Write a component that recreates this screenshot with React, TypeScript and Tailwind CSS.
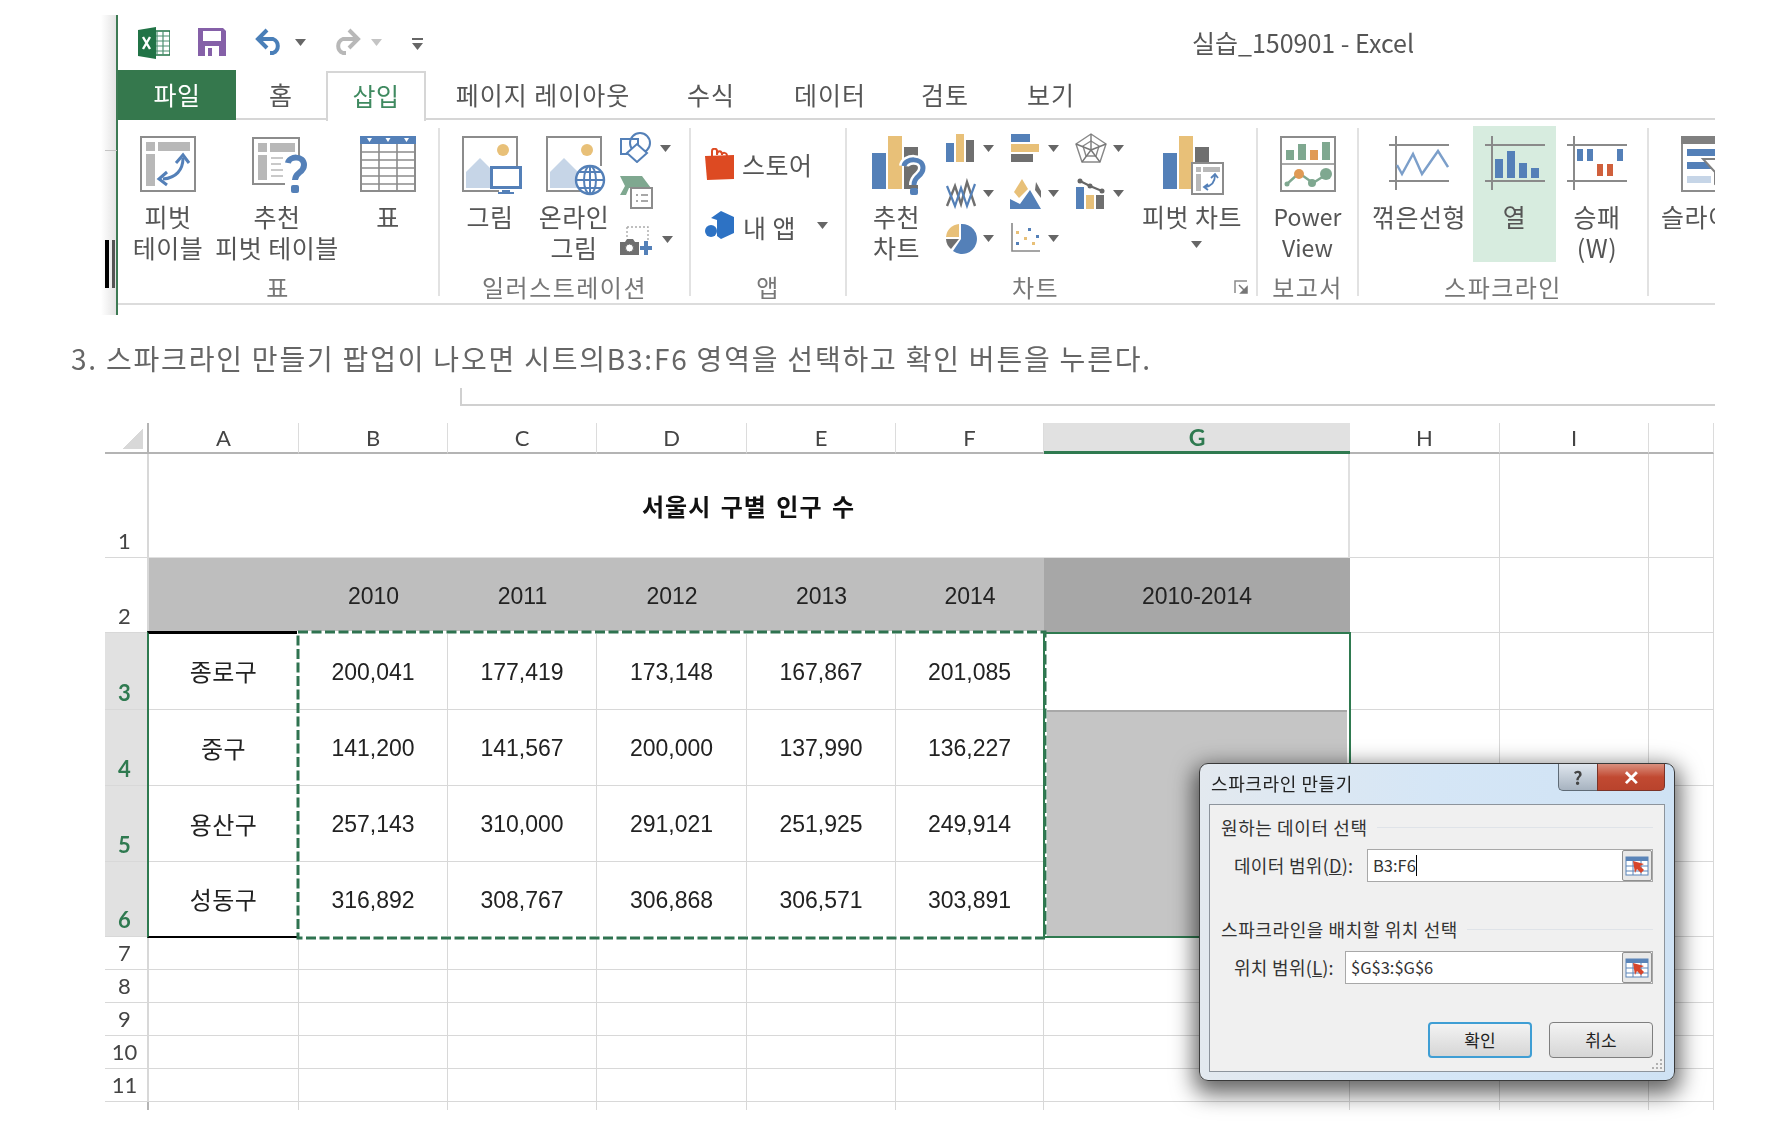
import type { ReactNode } from "react";

const BLUE = "#5480b8";
const TAN = "#e8c078";
const GRAY = "#6f6f6f";
const FRAME = "#8c8c8c";
const TEAL = "#7fa890";

const sheetCols =
  "grid grid-cols-[44px_150px_149px_149px_150px_149px_148px_306px_150px_149px_65px] grid-rows-[31px_104px_75px_77px_76px_76px_75px_33px_33px_33px_33px_33px_8px]";

const tabs = [
  { label: "홈", w: "w-[90px]" },
  { label: "삽입", w: "w-[100px]", active: true },
  { label: "페이지 레이아웃", w: "w-[234px]" },
  { label: "수식", w: "w-[102px]" },
  { label: "데이터", w: "w-[136px]" },
  { label: "검토", w: "w-[94px]" },
  { label: "보기", w: "w-[118px]" },
];

const dataRows = [
  { num: 3, name: "종로구", values: ["200,041", "177,419", "173,148", "167,867", "201,085"] },
  { num: 4, name: "중구", values: ["141,200", "141,567", "200,000", "137,990", "136,227"] },
  { num: 5, name: "용산구", values: ["257,143", "310,000", "291,021", "251,925", "249,914"] },
  { num: 6, name: "성동구", values: ["316,892", "308,767", "306,868", "306,571", "303,891"] },
];

const years = ["2010", "2011", "2012", "2013", "2014"];

function Caret({ light }: { light?: boolean }) {
  return (
    <svg width="11" height="7" viewBox="0 0 11 7" className="shrink-0">
      <path d="M0 0h11L5.5 7z" fill={light ? "#c4c4c4" : "#666"} />
    </svg>
  );
}

function ExcelLogo() {
  return (
    <svg width="32" height="32" viewBox="0 0 32 32">
      <rect x="14" y="4" width="18" height="24" fill="#fff" stroke="#217346" strokeWidth="1.5" />
      <path d="M19 4v24M25 4v24M14 9h18M14 14h18M14 19h18M14 24h18" stroke="#4d9071" strokeWidth="1.2" />
      <path d="M0 3 18 0v32L0 29z" fill="#217346" />
      <path d="M5 10l7 12M12 10 5 22" stroke="#fff" strokeWidth="2.4" />
    </svg>
  );
}

function SaveIcon() {
  return (
    <svg width="28" height="28" viewBox="0 0 28 28">
      <path d="M0 0h25l3 3v25H0z" fill="#8560a8" />
      <rect x="5" y="3" width="18" height="10" fill="#fff" />
      <rect x="7" y="18" width="14" height="10" fill="#fff" />
      <rect x="10" y="20" width="4" height="8" fill="#8560a8" />
    </svg>
  );
}

function UndoIcon({ color, flip }: { color: string; flip?: boolean }) {
  return (
    <svg width="30" height="27" viewBox="0 0 30 27" className={flip ? "-scale-x-100" : ""}>
      <path d="M4 11h14a7.5 7.5 0 0 1 0 14h-3" fill="none" stroke={color} strokeWidth="4" />
      <path d="M12 2 3 11l9 9" fill="none" stroke={color} strokeWidth="4" />
    </svg>
  );
}

function PivotIcon() {
  return (
    <svg width="56" height="56" viewBox="0 0 56 56">
      <rect x="1" y="1" width="54" height="54" fill="#fff" stroke={FRAME} strokeWidth="2" />
      <rect x="6" y="6" width="9" height="9" fill="#b8b8b8" />
      <rect x="18" y="6" width="32" height="9" fill="#b8b8b8" />
      <rect x="6" y="18" width="9" height="32" fill="#b8b8b8" />
      <path d="M43 22c0 12-7 20-20 21" fill="none" stroke={BLUE} strokeWidth="3" />
      <path d="M36 27l7-8 6 8M27 36l-8 7 8 6" fill="none" stroke={BLUE} strokeWidth="3" />
    </svg>
  );
}

function RecommendedPivotIcon() {
  return (
    <svg width="56" height="60" viewBox="0 0 56 60">
      <path d="M47 24V2H1v46h32" fill="#fff" stroke={FRAME} strokeWidth="2" />
      <rect x="6" y="7" width="9" height="9" fill="#b8b8b8" />
      <rect x="18" y="7" width="25" height="9" fill="#b8b8b8" />
      <rect x="6" y="19" width="9" height="25" fill="#b8b8b8" />
      <path d="M19 22h12M19 28h10M19 34h12M19 40h12" stroke="#c9c9c9" strokeWidth="2" />
      <path d="M36 27c1-7 16-8 16 2 0 8-9 7-9 15" fill="none" stroke={BLUE} strokeWidth="6" />
      <rect x="39" y="49" width="8" height="8" rx="2" fill={BLUE} />
    </svg>
  );
}

function TableIcon() {
  return (
    <svg width="56" height="56" viewBox="0 0 56 56">
      <rect x="1" y="1" width="54" height="54" fill="#fff" stroke={FRAME} strokeWidth="2" />
      <rect x="0" y="0" width="56" height="8" fill={BLUE} />
      <path d="M19 8v47M37 8v47M1 16h54M1 24h54M1 32h54M1 40h54M1 48h54" stroke={FRAME} strokeWidth="1.6" />
      <path d="M7 2h5L9.500 6zM25.500 2h5L28 6zM44 2h5l-2.500 4z" fill="#fff" />
    </svg>
  );
}

function PictureBase() {
  return (
    <>
      <path d="M55 30V1H1v54h36" fill="#fff" stroke={FRAME} strokeWidth="2" />
      <circle cx="41" cy="14" r="6" fill={TAN} />
      <path d="M4 52V36l14-14 14 14v16z" fill="#c6d5e7" />
    </>
  );
}

function PictureIcon() {
  return (
    <svg width="62" height="60" viewBox="0 0 62 60">
      <PictureBase />
      <rect x="29.500" y="31.500" width="29" height="20" fill="#fff" stroke={BLUE} strokeWidth="3" />
      <path d="M40 54h8v2h4v2H36v-2h4z" fill={BLUE} />
    </svg>
  );
}

function OnlinePictureIcon() {
  return (
    <svg width="62" height="60" viewBox="0 0 62 60">
      <PictureBase />
      <circle cx="44" cy="44" r="14" fill="#fff" stroke={BLUE} strokeWidth="2.4" />
      <ellipse cx="44" cy="44" rx="6" ry="14" fill="none" stroke={BLUE} strokeWidth="2" />
      <path d="M44 30v28M30 44h28M33 36h22M33 52h22" stroke={BLUE} strokeWidth="2" />
    </svg>
  );
}

function ShapesIcon() {
  return (
    <svg width="32" height="31" viewBox="0 0 32 31">
      <rect x="1" y="7" width="17" height="15" fill="none" stroke={BLUE} strokeWidth="2" />
      <circle cx="20" cy="11" r="10" fill="none" stroke={BLUE} strokeWidth="2" />
      <path d="M17 12l10 9-10 9-10-9z" fill="#fff" stroke={BLUE} strokeWidth="2" />
    </svg>
  );
}

function SmartArtIcon() {
  return (
    <svg width="33" height="33" viewBox="0 0 33 33">
      <path d="M0 0h22l9 12H9l-3 7H0l5-9z" fill={TEAL} />
      <rect x="11" y="12" width="21" height="20" fill="#fff" stroke={FRAME} strokeWidth="2" />
      <path d="M16 19h2M21 19h7M16 25h2M21 25h7" stroke={FRAME} strokeWidth="1.6" />
    </svg>
  );
}

function ScreenshotIcon() {
  return (
    <svg width="32" height="30" viewBox="0 0 32 30">
      <path d="M7 1h21v14" fill="none" stroke="#aaa" strokeWidth="1.4" strokeDasharray="2 2" />
      <path d="M7 1v10" stroke="#aaa" strokeWidth="1.4" strokeDasharray="2 2" />
      <path d="M0 16h5l2-3h6l2 3h4v13H0z" fill={GRAY} />
      <circle cx="9.500" cy="22" r="4" fill="#fff" stroke={GRAY} />
      <path d="M26 15v14M20 22h12" stroke={BLUE} strokeWidth="4" />
    </svg>
  );
}

function StoreIcon() {
  return (
    <svg width="30" height="32" viewBox="0 0 30 32">
      <path d="M0 8l29-1v24L2 32z" fill="#dd4a22" />
      <path d="M7 9V3c0-3 5-3 5 0v4c0-5 5-5 5 0 0-3 5-3 5 1" fill="none" stroke="#dd4a22" strokeWidth="2" />
    </svg>
  );
}

function MyAppsIcon() {
  return (
    <svg width="30" height="28" viewBox="0 0 30 28">
      <path d="M16 0l13 6v16l-13 6-4-3V9L6 7z" fill="#2d72c4" />
      <circle cx="6" cy="20" r="6" fill="#2d72c4" />
    </svg>
  );
}

function RecommendedChartIcon() {
  return (
    <svg width="56" height="60" viewBox="0 0 56 60">
      <rect x="0" y="17" width="14" height="36" fill={BLUE} />
      <rect x="16" y="0" width="14" height="53" fill={TAN} />
      <rect x="32" y="11" width="14" height="42" fill={GRAY} />
      <path d="M32 30c1-8 19-9 19 2 0 9-9 7-9 17" fill="none" stroke="#fff" strokeWidth="10" />
      <path d="M32 30c1-8 19-9 19 2 0 9-9 7-9 17" fill="none" stroke={BLUE} strokeWidth="5" />
      <rect x="38" y="52" width="8" height="7" rx="2" fill={BLUE} />
    </svg>
  );
}

function ColumnChartIcon() {
  return (
    <svg width="30" height="30" viewBox="0 0 30 30">
      <rect x="1" y="10" width="8" height="19" fill={BLUE} />
      <rect x="11" y="1" width="8" height="28" fill={TAN} />
      <rect x="21" y="7" width="8" height="22" fill={GRAY} />
    </svg>
  );
}

function BarChartIcon() {
  return (
    <svg width="30" height="30" viewBox="0 0 30 30">
      <rect x="1" y="1" width="19" height="8" fill={BLUE} />
      <rect x="1" y="11" width="28" height="8" fill={TAN} />
      <rect x="1" y="21" width="22" height="8" fill={GRAY} />
    </svg>
  );
}

function RadarIcon() {
  return (
    <svg width="32" height="30" viewBox="0 0 32 30">
      <path d="M16 1l15 10-6 18H7L1 11z" fill="none" stroke="#888" strokeWidth="1.4" />
      <path d="M16 8l8 5-3 10H11L8 13z" fill="none" stroke="#888" strokeWidth="1.4" />
      <path d="M16 1v16M31 11 16 17M25 29 16 17M7 29l9-12M1 11l15 6" stroke="#777" strokeWidth="1.4" />
    </svg>
  );
}

function LineChartIcon() {
  return (
    <svg width="32" height="32" viewBox="0 0 32 32">
      <path d="M2 28 10 8l6 18 6-22 8 24" fill="none" stroke={GRAY} strokeWidth="2.4" />
      <path d="M2 8l8 20 6-18 6 18 8-22" fill="none" stroke={BLUE} strokeWidth="2.2" />
    </svg>
  );
}

function AreaChartIcon() {
  return (
    <svg width="32" height="32" viewBox="0 0 32 32">
      <path d="M4 14 12 1l6 10-9 9z" fill={TAN} />
      <path d="M26 4l5 9v7l-6-8z" fill={GRAY} />
      <path d="M0 31V21l10 5 10-14 11 19z" fill={BLUE} />
    </svg>
  );
}

function ComboIcon() {
  return (
    <svg width="30" height="32" viewBox="0 0 30 32">
      <rect x="1" y="9" width="8" height="22" fill={BLUE} />
      <rect x="11" y="17" width="8" height="14" fill={TAN} />
      <rect x="21" y="17" width="8" height="14" fill={GRAY} />
      <path d="M5 3l10 5 12 5" stroke="#666" strokeWidth="2" fill="none" />
      <circle cx="5" cy="3" r="2.500" fill="#666" />
      <circle cx="15" cy="8" r="2.500" fill="#666" />
      <circle cx="27" cy="13" r="2.500" fill="#666" />
    </svg>
  );
}

function PieIcon() {
  return (
    <svg width="32" height="32" viewBox="0 0 32 32">
      <path d="M16 1a15 15 0 1 1-8 27l8-12z" fill={BLUE} />
      <path d="M14 1v13H1A14 14 0 0 1 14 1z" fill={TAN} />
      <path d="M1 16h13l-8 10a14 14 0 0 1-5-10z" fill={GRAY} />
    </svg>
  );
}

function ScatterIcon() {
  return (
    <svg width="30" height="30" viewBox="0 0 30 30">
      <path d="M2 0v28h28" fill="none" stroke="#888" strokeWidth="1.6" />
      <rect x="6" y="8" width="3" height="3" fill={TAN} />
      <rect x="6" y="19" width="3" height="3" fill={BLUE} />
      <rect x="14" y="14" width="3" height="3" fill={TAN} />
      <rect x="18" y="5" width="3" height="3" fill={BLUE} />
      <rect x="22" y="19" width="3" height="3" fill={TAN} />
      <rect x="26" y="12" width="3" height="3" fill={BLUE} />
    </svg>
  );
}

function PivotChartIcon() {
  return (
    <svg width="62" height="60" viewBox="0 0 62 60">
      <rect x="0" y="17" width="14" height="36" fill={BLUE} />
      <rect x="16" y="0" width="14" height="53" fill={TAN} />
      <rect x="32" y="11" width="14" height="42" fill={GRAY} />
      <rect x="29" y="27" width="31" height="31" fill="#fff" stroke={FRAME} strokeWidth="2" />
      <rect x="33" y="31" width="5" height="5" fill="#b8b8b8" />
      <rect x="40" y="31" width="17" height="5" fill="#b8b8b8" />
      <rect x="33" y="38" width="5" height="17" fill="#b8b8b8" />
      <path d="M52 39c0 7-3 11-10 12M48 42l4-4 3 4M45 48l-4 3 4 3" fill="none" stroke={BLUE} strokeWidth="1.800" />
    </svg>
  );
}

function PowerViewIcon() {
  return (
    <svg width="56" height="56" viewBox="0 0 56 56">
      <rect x="1" y="1" width="54" height="54" fill="#fff" stroke={FRAME} strokeWidth="2" />
      <path d="M1 28h54" stroke={FRAME} strokeWidth="1.6" />
      <rect x="6" y="14" width="8" height="10" fill={TEAL} />
      <rect x="18" y="8" width="8" height="16" fill={TEAL} />
      <rect x="30" y="14" width="8" height="10" fill="#e09a55" />
      <rect x="42" y="6" width="8" height="18" fill={TEAL} />
      <path d="M7 48l12-11 14 10 14-9" fill="none" stroke={TEAL} strokeWidth="2.400" />
      <circle cx="7" cy="48" r="2.500" fill={TEAL} />
      <circle cx="19" cy="38" r="5" fill="#e09a55" />
      <circle cx="32" cy="47" r="4" fill={TEAL} />
      <circle cx="46" cy="38" r="6" fill={TEAL} />
    </svg>
  );
}

function SparkFrame({ children }: { children: ReactNode }) {
  return (
    <svg width="60" height="54" viewBox="0 0 60 54">
      <path d="M7 0v54M0 9h60M0 45h60" stroke="#8a8a8a" strokeWidth="2" />
      {children}
    </svg>
  );
}

function SparkLine() {
  return (
    <SparkFrame>
      <path d="M8 29l5 9 11-20 9 20 16-23 10 16" fill="none" stroke="#7c9fca" strokeWidth="2.400" />
    </SparkFrame>
  );
}

function SparkColumn() {
  return (
    <SparkFrame>
      <rect x="10" y="23" width="8" height="19" fill={BLUE} />
      <rect x="22" y="15" width="8" height="27" fill={BLUE} />
      <rect x="34" y="27" width="8" height="15" fill={BLUE} />
      <rect x="46" y="32" width="8" height="10" fill={BLUE} />
    </SparkFrame>
  );
}

function SparkWinLoss() {
  return (
    <SparkFrame>
      <rect x="10" y="13" width="6" height="12" fill={BLUE} />
      <rect x="20" y="13" width="6" height="12" fill={BLUE} />
      <rect x="30" y="28" width="6" height="12" fill="#d0603c" />
      <rect x="40" y="28" width="6" height="12" fill="#d0603c" />
      <rect x="50" y="13" width="6" height="12" fill={BLUE} />
    </SparkFrame>
  );
}

function SlicerIcon() {
  return (
    <svg width="56" height="56" viewBox="0 0 56 56">
      <rect x="1" y="1" width="54" height="54" fill="#fff" stroke={FRAME} strokeWidth="2" />
      <rect x="0" y="0" width="56" height="8" fill="#808080" />
      <rect x="6" y="13" width="44" height="7" fill={BLUE} />
      <rect x="6" y="26" width="25" height="7" fill={BLUE} />
      <rect x="6" y="40" width="24" height="7" fill="#c6d5e7" />
      <path d="M22 23h30L40 36v16l-6-4V36z" fill="#fff" stroke="#808080" strokeWidth="2" />
    </svg>
  );
}

function LauncherIcon() {
  return (
    <svg width="14" height="14" viewBox="0 0 14 14">
      <path d="M1 13V1h12" fill="none" stroke="#8a8a8a" strokeWidth="1.500" />
      <path d="M5 5l6 6M13 7v6H7z" stroke="#777" fill="#777" strokeWidth="1.500" />
    </svg>
  );
}

function RefIcon() {
  return (
    <svg width="24" height="24" viewBox="0 0 24 24">
      <rect x="1" y="3" width="22" height="18" fill="#fff" stroke="#5a84b8" />
      <rect x="1" y="3" width="22" height="4" fill="#5a84b8" />
      <path d="M1 12h22M1 17h22M8 7v14M16 7v14" stroke="#5a84b8" />
      <path d="M8 7l11 3-4 2 4 4-3 3-4-4-2 4z" fill="#d8452a" />
    </svg>
  );
}

function BigItem({ width, icon, lines, latin }: { width: string; icon: ReactNode; lines: string[]; latin?: boolean }) {
  return (
    <div className={`${width} flex shrink-0 flex-col items-center pt-[16px]`}>
      <div className="flex h-[65px] w-full justify-center">{icon}</div>
      {lines.map((line) => (
        <span
          key={line}
          className={`whitespace-nowrap leading-[31px] ${latin ? "text-[23px]" : "text-[25px] tracking-[0.5px]"}`}
        >
          {line}
        </span>
      ))}
    </div>
  );
}

function Group({ width, label, labelPad, launcher, children }: {
  width: string;
  label: string;
  labelPad?: string;
  launcher?: boolean;
  children: ReactNode;
}) {
  return (
    <div className="flex shrink-0">
      <div className={`${width} relative flex flex-col`}>
        <div className="flex h-[152px]">{children}</div>
        <div className={`${labelPad ?? ""} whitespace-nowrap text-center text-[24px] leading-[30px] tracking-[1.5px] text-[#777]`}>{label}</div>
        {launcher && (
          <div className="absolute bottom-[9px] right-[8px] flex">
            <LauncherIcon />
          </div>
        )}
      </div>
      <div className="mt-[8px] h-[168px] w-[2px] bg-[#e2e2e2]" />
    </div>
  );
}

function ChartPick({ icon }: { icon: ReactNode }) {
  return (
    <div className="flex h-[45px] items-start">
      <div className="flex w-[38px] justify-start">{icon}</div>
      <div className="pt-[12px]">
        <Caret />
      </div>
    </div>
  );
}

function Ribbon() {
  return (
    <div className="ml-[101px] flex h-[300px] w-[1614px] overflow-hidden font-['Noto_Sans_CJK_KR','Noto_Sans',sans-serif] text-[#555] blur-[0.5px]">
      <div className="relative w-[17px] shrink-0 border-r-[2px] border-[#3d7a54] bg-gradient-to-r from-white to-[#e4e4e4]">
        <div className="absolute left-[4px] top-[135px] h-px w-[12px] bg-[#c4c4c4]" />
        <div className="absolute left-[4px] top-[225px] h-[48px] w-[4px] bg-black" />
        <div className="absolute left-[11px] top-[225px] h-[48px] w-[3px] bg-[#555]" />
      </div>

      <div className="w-[1597px] shrink-0">
        <div className="flex h-[55px] items-start">
          <div className="ml-[20px] mt-[12px]"><ExcelLogo /></div>
          <div className="ml-[28px] mt-[13px]"><SaveIcon /></div>
          <div className="ml-[29px] mt-[13px]"><UndoIcon color="#4a7fb8" /></div>
          <div className="ml-[10px] mt-[24px]"><Caret /></div>
          <div className="ml-[25px] mt-[13px]"><UndoIcon color="#b8b8b8" flip /></div>
          <div className="ml-[10px] mt-[24px]"><Caret light /></div>
          <div className="ml-[29px] mt-[23px] flex w-[12px] flex-col items-center gap-[3px]">
            <div className="h-[2px] w-[11px] bg-[#666]" />
            <Caret />
          </div>
          <div className="ml-[769px] whitespace-nowrap text-[25px] leading-[55px] text-[#555]">실습_150901 - Excel</div>
        </div>

        <div className="flex h-[50px] border-b-[2px] border-[#d6d6d6]">
          <div className="flex h-[50px] w-[118px] items-center justify-center bg-[#35784d] text-[25px] tracking-[0.5px] text-white">파일</div>
          {tabs.map((tab) =>
            tab.active ? (
              <div
                key={tab.label}
                className={`${tab.w} -mb-[2px] mt-[1px] flex h-[50px] items-center justify-center border-x-[2px] border-t-[2px] border-[#d6d6d6] bg-white pb-[3px] text-[25px] tracking-[0.5px] text-[#3f8a60]`}
              >
                {tab.label}
              </div>
            ) : (
              <div key={tab.label} className={`${tab.w} flex items-center justify-center whitespace-nowrap pt-[2px] text-[25px] tracking-[1px]`}>
                {tab.label}
              </div>
            ),
          )}
        </div>

        <div className="flex h-[185px] border-b-[2px] border-[#dcdcdc]">
          <Group width="w-[320px]" label="표">
            <BigItem width="w-[100px]" icon={<PivotIcon />} lines={["피벗", "테이블"]} />
            <BigItem width="w-[118px]" icon={<div className="pl-[6px]"><RecommendedPivotIcon /></div>} lines={["추천", "피벗 테이블"]} />
            <BigItem width="w-[100px] ml-[2px]" icon={<TableIcon />} lines={["표"]} />
          </Group>

          <Group width="w-[249px]" label="일러스트레이션">
            <BigItem width="w-[98px] ml-[1px]" icon={<div className="ml-[5px]"><PictureIcon /></div>} lines={["그림"]} />
            <BigItem width="w-[70px]" icon={<div className="shrink-0 pl-[5px]"><OnlinePictureIcon /></div>} lines={["온라인", "그림"]} />
            <div className="ml-[11px] flex flex-col pt-[12px]">
              <div className="flex h-[44px] gap-[8px]">
                <ShapesIcon />
                <div className="pt-[13px]"><Caret /></div>
              </div>
              <div className="h-[50px]"><SmartArtIcon /></div>
              <div className="flex gap-[10px]">
                <ScreenshotIcon />
                <div className="pt-[10px]"><Caret /></div>
              </div>
            </div>
          </Group>

          <Group width="w-[154px]" label="앱">
            <div className="flex flex-col pl-[14px] pt-[28px]">
              <div className="flex h-[63px] items-start gap-[7px]">
                <StoreIcon />
                <span className="whitespace-nowrap text-[25px] leading-[32px] tracking-[0.5px]">스토어</span>
              </div>
              <div className="flex items-start gap-[8px]">
                <MyAppsIcon />
                <span className="whitespace-nowrap text-[25px] leading-[32px] tracking-[0.5px]">내 앱</span>
                <div className="ml-[13px] pt-[11px]"><Caret /></div>
              </div>
            </div>
          </Group>

          <Group width="w-[409px]" label="차트" labelPad="pr-[32px]" launcher>
            <BigItem width="w-[99px]" icon={<div className="pl-[7px]"><RecommendedChartIcon /></div>} lines={["추천", "차트"]} />
            <div className="grid w-[195px] shrink-0 -translate-x-[1px] grid-cols-3 content-start pt-[13px]">
              <ChartPick icon={<ColumnChartIcon />} />
              <ChartPick icon={<BarChartIcon />} />
              <ChartPick icon={<RadarIcon />} />
              <ChartPick icon={<LineChartIcon />} />
              <ChartPick icon={<AreaChartIcon />} />
              <ChartPick icon={<ComboIcon />} />
              <ChartPick icon={<PieIcon />} />
              <ChartPick icon={<ScatterIcon />} />
            </div>
            <div className="flex w-[102px] shrink-0 flex-col items-center pt-[16px]">
              <div className="flex h-[65px] w-full justify-center pl-[3px]"><PivotChartIcon /></div>
              <span className="whitespace-nowrap text-[25px] leading-[31px] tracking-[0.5px]">피벗 차트</span>
              <div className="pl-[8px] pt-[9px]"><Caret /></div>
            </div>
          </Group>

          <Group width="w-[99px]" label="보고서">
            <BigItem width="w-[99px]" icon={<PowerViewIcon />} lines={["Power", "View"]} latin />
          </Group>

          <Group width="w-[288px]" label="스파크라인">
            <div className="ml-[6px] flex">
              <BigItem width="w-[108px]" icon={<SparkLine />} lines={["꺾은선형"]} />
              <div className="mt-[6px] h-[136px] w-[83px] shrink-0 bg-[#d7ecdf]">
                <BigItem width="w-[83px] -mt-[6px]" icon={<SparkColumn />} lines={["열"]} />
              </div>
              <BigItem width="w-[82px]" icon={<SparkWinLoss />} lines={["승패", "(W)"]} />
            </div>
          </Group>

          <div className="flex w-[66px] shrink-0 flex-col overflow-hidden pl-[12px] pt-[16px]">
            <div className="h-[65px] pl-[20px]"><div className="w-[56px]"><SlicerIcon /></div></div>
            <span className="whitespace-nowrap text-[25px] leading-[31px] tracking-[0.5px]">슬라이서</span>
          </div>
        </div>
      </div>
    </div>
  );
}

function RowHead({ children, active, last }: { children?: ReactNode; active?: boolean; last?: boolean }) {
  return (
    <div
      className={`flex items-end justify-center border-r-[2px] border-[#b4b4b4] pb-[2px] pr-[3px] font-['Lato',sans-serif] text-[22px] leading-[28px] ${
        last ? "" : "border-b border-[#d8d8d8]"
      } ${active ? "bg-[#e1e1e1] font-bold text-[#2f7a50]" : "text-[#444]"}`}
    >
      {children}
    </div>
  );
}

function Blank({ last }: { last?: boolean }) {
  return <div className={`border-r border-[#d8d8d8] ${last ? "" : "border-b"}`} />;
}

function Sheet() {
  const letters = ["A", "B", "C", "D", "E", "F"];
  return (
    <div className="relative ml-[105px] mt-[17px] w-[1610px] font-['Liberation_Sans',sans-serif] text-[23px] text-[#222] blur-[0.4px]">
      <div className={sheetCols}>
        <div className="flex items-end justify-end border-b-[2px] border-r-[2px] border-[#b4b4b4] pb-[3px] pr-[4px]">
          <div className="h-[20px] w-[21px] bg-gradient-to-br from-transparent from-50% to-[#d8d8d8] to-50%" />
        </div>
        {letters.map((l) => (
          <div key={l} className="flex items-center justify-center border-b-[2px] border-r border-b-[#b4b4b4] border-r-[#dcdcdc] pb-[1px] font-['Lato',sans-serif] text-[22px] text-[#444]">
            {l}
          </div>
        ))}
        <div className="flex items-center justify-center border-b-[3px] border-[#2f7a50] bg-[#e1e1e1] font-['Lato',sans-serif] text-[23px] font-bold text-[#2f7a50]">G</div>
        {["H", "I", ""].map((l) => (
          <div key={l} className="flex items-center justify-center border-b-[2px] border-r border-b-[#b4b4b4] border-r-[#dcdcdc] pb-[1px] font-['Lato',sans-serif] text-[22px] text-[#444]">
            {l}
          </div>
        ))}

        <RowHead>1</RowHead>
        <div className="col-span-7 flex items-center justify-center border-b border-r-[2px] border-[#e0e0e0] font-['Noto_Sans_CJK_KR',sans-serif] text-[24px] font-bold tracking-[1px] text-[#111] [word-spacing:3px]">
          서울시 구별 인구 수
        </div>
        <Blank />
        <Blank />
        <Blank />

        <RowHead>2</RowHead>
        <div className="bg-[#bebebe]" />
        {years.map((y) => (
          <div key={y} className="flex items-center justify-center bg-[#bebebe] pt-[1px]">{y}</div>
        ))}
        <div className="flex items-center justify-center bg-[#a7a7a7] pt-[1px]">2010-2014</div>
        <Blank />
        <Blank />
        <Blank />

        {dataRows.map((row) => (
          <div key={row.num} className="contents">
            <RowHead active>{row.num}</RowHead>
            <div className="flex items-center justify-center border-b border-r border-[#d8d8d8] font-['Noto_Sans_CJK_KR',sans-serif] text-[24px] tracking-[0.5px]">{row.name}</div>
            {row.values.map((v) => (
              <div key={v} className="flex items-center justify-center border-b border-r border-[#d8d8d8] pt-[2px]">{v}</div>
            ))}
            <div />
            <Blank />
            <Blank />
            <Blank />
          </div>
        ))}

        {[7, 8, 9, 10, 11].map((n) => (
          <div key={n} className="contents">
            <RowHead>{n}</RowHead>
            {Array.from({ length: 10 }, (_, i) => (
              <Blank key={i} />
            ))}
          </div>
        ))}
        <RowHead last />
        {Array.from({ length: 10 }, (_, i) => (
          <Blank key={i} last />
        ))}
      </div>

      {/* selection marks over the cells */}
      <div className={`${sheetCols} pointer-events-none absolute inset-0`}>
        <div className="col-[8/9] row-[5/8] mx-[3px] border-t-[2px] border-[#a8a8a8] bg-[#c5c5c5]" />
        <div className="col-[2/3] row-[4/8] -mb-[1px] -ml-[2px] -mt-[2px] border-b-[2px] border-l-[2px] border-t-[3px] border-b-black border-l-[#2f7a50] border-t-black" />
        <div className="col-[3/8] row-[4/8] -m-[2px] border-[3px] border-white" />
        <svg className="col-[3/8] row-[4/8] -m-[1px] h-[calc(100%+2px)] w-[calc(100%+2px)] overflow-visible">
          <rect x="0" y="0" width="100%" height="100%" fill="none" stroke="#2f7350" strokeWidth="3" strokeDasharray="10 3.500" />
        </svg>
        <div className="col-[8/9] row-[4/8] -m-[1px] border-[2px] border-[#2f7a50]" />
      </div>
    </div>
  );
}

function SectionTitle({ children }: { children: string }) {
  return (
    <div className="flex items-center gap-[9px]">
      <span className="whitespace-nowrap text-[18px] leading-[24px] tracking-[0.6px] text-[#333]">{children}</span>
      <div className="h-[1px] flex-1 bg-[#dfe3e8]" />
    </div>
  );
}

function RefInput({ label, value, caret, inputWidth }: { label: ReactNode; value: string; caret?: boolean; inputWidth: string }) {
  return (
    <div className="flex items-center justify-between pl-[13px]">
      <span className="whitespace-nowrap text-[18px] tracking-[0.3px] text-[#333]">{label}</span>
      <div className={`${inputWidth} flex h-[33px] items-center border border-[#a8a8a8] bg-white pl-[5px] text-[16.500px] text-[#333]`}>
        <span>{value}</span>
        {caret && <span className="h-[21px] w-px bg-black" />}
        <div className="ml-auto flex h-[31px] w-[30px] items-center justify-center rounded-[2px] border border-[#8f8f8f] bg-[#e8e8e8]">
          <RefIcon />
        </div>
      </div>
    </div>
  );
}

function Dialog() {
  return (
    <div className="absolute left-[1199px] top-[763px] flex h-[318px] w-[476px] flex-col rounded-[9px] border border-[#3a3a3a] bg-gradient-to-r from-[#e3e9ef] via-[#d5e6f6] to-[#cfe2f4] px-[9px] pb-[8px] font-['Noto_Sans_CJK_KR','Noto_Sans',sans-serif] shadow-[0_8px_22px_5px_rgba(0,0,0,0.6)] blur-[0.3px]">
      <div className="flex h-[40px] shrink-0 items-start justify-between">
        <span className="pl-[2px] pt-[6px] text-[18px] leading-[26px] tracking-[0.6px] text-[#222]">스파크라인 만들기</span>
        <div className="flex h-[27px]">
          <div className="flex w-[39px] items-center justify-center rounded-bl-[5px] border-b border-l border-[#5f6b76] bg-gradient-to-b from-[#dfe6ee] to-[#a7b3c0] text-[18px] font-bold leading-none text-[#444]">?</div>
          <div className="flex w-[68px] items-center justify-center rounded-br-[5px] border border-t-0 border-[#7a3328] bg-gradient-to-b from-[#d98f7e] via-[#c14a32] to-[#b9432c] text-[20px] font-bold leading-none text-white">✕</div>
        </div>
      </div>
      <div className="relative flex-1 border border-[#8d949c] bg-[#f0f0f0] px-[11px] pt-[10px]">
        <SectionTitle>원하는 데이터 선택</SectionTitle>
        <div className="mt-[10px]">
          <RefInput
            label={<>데이터 범위(<span className="underline">D</span>):</>}
            value="B3:F6"
            caret
            inputWidth="w-[286px]"
          />
        </div>
        <div className="mt-[35px]">
          <SectionTitle>스파크라인을 배치할 위치 선택</SectionTitle>
        </div>
        <div className="mt-[10px]">
          <RefInput
            label={<>위치 범위(<span className="underline">L</span>):</>}
            value="$G$3:$G$6"
            inputWidth="w-[308px]"
          />
        </div>
        <div className="mt-[38px] flex justify-end gap-[17px]">
          <button className="h-[36px] w-[104px] rounded-[4px] border-[2px] border-[#3f9ed4] bg-gradient-to-b from-[#f3f3f3] to-[#d6d6d6] text-[17px] text-[#222]">확인</button>
          <button className="h-[36px] w-[104px] rounded-[4px] border border-[#7f7f7f] bg-gradient-to-b from-[#f3f3f3] to-[#d6d6d6] text-[17px] text-[#222]">취소</button>
        </div>
        <div className="absolute bottom-[2px] right-[2px] grid grid-cols-3 gap-[2px]">
          {[0, 1, 2, 3, 4, 5, 6, 7, 8].map((i) => (
            <span key={i} className={`h-[2px] w-[2px] ${[0, 1, 3].includes(i) ? "" : "bg-[#b0b0b0]"}`} />
          ))}
        </div>
      </div>
    </div>
  );
}

export default function App() {
  return (
    <div className="relative h-[1128px] w-[1790px] overflow-hidden bg-white pt-[15px]">
      <Ribbon />
      <p className="ml-[71px] mt-[23px] whitespace-nowrap font-['Noto_Sans_CJK_KR','Noto_Sans',sans-serif] text-[28px] leading-[40px] tracking-[1.800px] text-[#666] blur-[0.3px]">
        3. 스파크라인 만들기 팝업이 나오면 시트의B3:F6 영역을 선택하고 확인 버튼을 누른다.
      </p>
      <div className="ml-[460px] mt-[10px] h-[18px] w-[1255px] border-b-[2px] border-l-[2px] border-[#d0d0d0]" />
      <Sheet />
      <Dialog />
    </div>
  );
}
